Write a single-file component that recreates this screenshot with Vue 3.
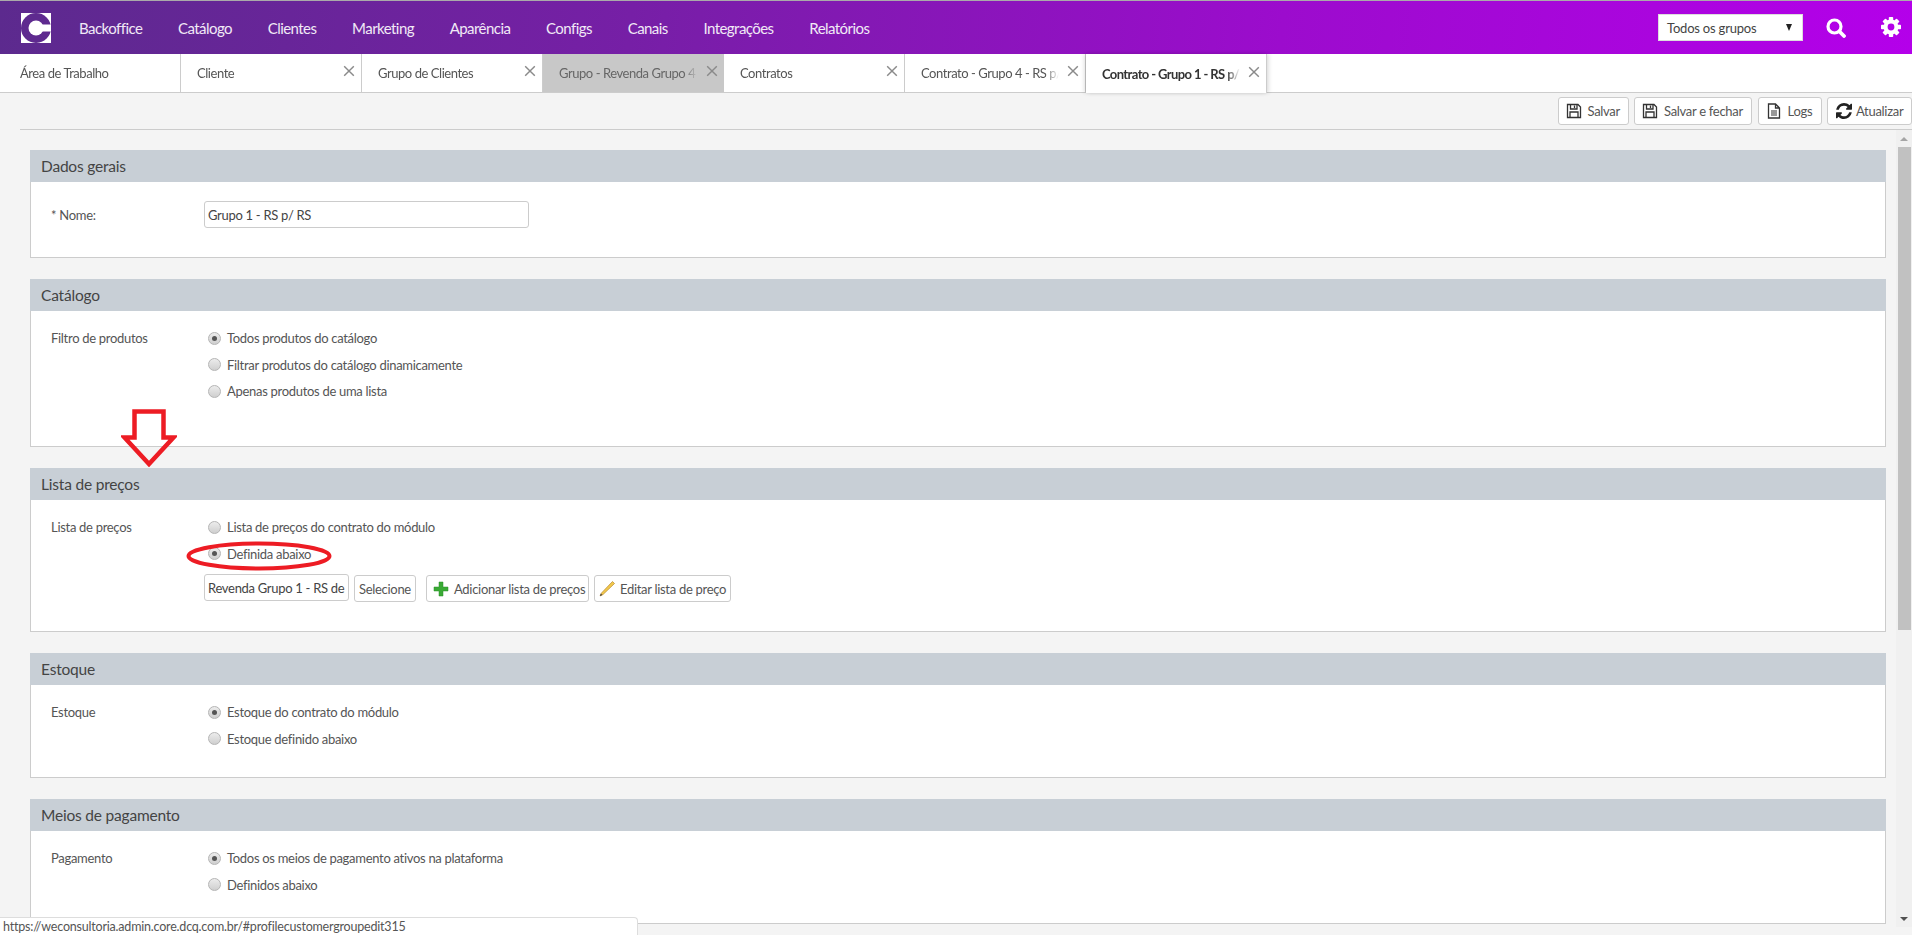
<template>
  <div class="page">
    <header class="topbar">
      <svg class="logo" viewBox="0 0 30 30">
        <rect width="30" height="30" fill="#fff" />
        <circle cx="15" cy="15" r="15" fill="#5e2a8f" />
        <circle cx="15" cy="15" r="7.5" fill="#fff" />
        <rect x="15" y="11.5" width="15" height="7" fill="#fff" />
      </svg>
      <nav class="menu">
        <a v-for="item in menu" :key="item">{{ item }}</a>
      </nav>
      <div class="group-select">
        <span>Todos os grupos</span>
        <i class="caret"></i>
      </div>
      <svg class="search" viewBox="0 0 20 20">
        <circle cx="8.5" cy="8.5" r="6.5" fill="none" stroke="#fff" stroke-width="3.2" />
        <path d="M13.5 13.5L18 18" stroke="#fff" stroke-width="3.8" stroke-linecap="round" />
      </svg>
      <svg class="gear" viewBox="0 0 20 20">
        <rect
          v-for="a in [0, 45, 90, 135, 180, 225, 270, 315]"
          :key="a"
          x="7.8"
          y="0"
          width="4.4"
          height="5"
          rx="0.8"
          fill="#fff"
          :transform="`rotate(${a} 10 10)`"
        />
        <circle cx="10" cy="10" r="5.4" fill="none" stroke="#fff" stroke-width="4" />
      </svg>
    </header>

    <div class="tabs">
      <div
        v-for="tab in tabs"
        :key="tab.title"
        class="tab"
        :class="{ active: tab.active, muted: tab.muted, home: tab.home }"
      >
        <span class="tab-title">{{ tab.title }}</span>
        <svg v-if="!tab.home" class="tab-close" viewBox="0 0 10 10">
          <path d="M1 1l8 8M9 1l-8 8" stroke="#8a8a8a" stroke-width="1.2" fill="none" />
        </svg>
      </div>
    </div>

    <div class="toolbar">
      <button class="btn save">
        <svg class="ico" viewBox="0 0 16 16">
          <path d="M1.5 1.5h10.5l2.5 2.5v10.5h-13z" fill="none" stroke="#333" stroke-width="1.3" />
          <path d="M4.5 1.5v4.5h6.5v-4.5M8.5 2.6v2.4M4 14.5v-5.5h8v5.5" fill="none" stroke="#333" stroke-width="1.3" />
        </svg>
        Salvar
      </button>
      <button class="btn save-close">
        <svg class="ico" viewBox="0 0 16 16">
          <path d="M1.5 1.5h10.5l2.5 2.5v10.5h-13z" fill="none" stroke="#333" stroke-width="1.3" />
          <path d="M4.5 1.5v4.5h6.5v-4.5M8.5 2.6v2.4M4 14.5v-5.5h8v5.5" fill="none" stroke="#333" stroke-width="1.3" />
        </svg>
        Salvar e fechar
      </button>
      <button class="btn logs">
        <svg class="ico" viewBox="0 0 16 16">
          <path d="M2.5 1h7l4 4v10h-11zM9.5 1v4h4" fill="none" stroke="#333" stroke-width="1.3" />
          <path d="M5 8h6M5 10h6M5 12h6" stroke="#333" stroke-width="1.1" />
        </svg>
        Logs
      </button>
      <button class="btn refresh">
        <svg class="ico" viewBox="0 0 1536 1536">
          <path
            fill="#222"
            d="M1511 928q0 5-1 7-64 268-268 434.5t-478 166.5q-146 0-282.5-55t-243.5-157l-129 129q-19 19-45 19t-45-19-19-45v-448q0-26 19-45t45-19h448q26 0 45 19t19 45-19 45l-137 137q71 66 161 102t187 36q134 0 250-65t186-179q11-17 53-117 8-23 30-23h192q13 0 22.5 9.5t9.5 22.5zm25-800v448q0 26-19 45t-45 19h-448q-26 0-45-19t-19-45 19-45l138-138q-148-137-349-137-134 0-250 65t-186 179q-11 17-53 117-8 23-30 23h-199q-13 0-22.5-9.5t-9.5-22.5v-7q65-268 270-434.5t480-166.5q146 0 284 55.5t245 156.5l130-129q19-19 45-19t45 19 19 45z"
          />
        </svg>
        Atualizar
      </button>
    </div>

    <div class="workspace">
      <main class="forms">
        <section class="panel">
          <h2>Dados gerais</h2>
          <div class="panel-body name-body">
            <label class="field-label">* Nome:</label>
            <input class="text-input name-input" value="Grupo 1 - RS p/ RS" />
          </div>
        </section>

        <section v-for="s in sections" :key="s.title" class="panel">
          <h2>{{ s.title }}</h2>
          <div class="panel-body" :class="s.bodyClass">
            <label class="field-label">{{ s.label }}</label>
            <div class="options">
              <div v-for="o in s.options" :key="o.text" class="option">
                <span class="radio" :class="{ on: o.on }"></span>
                {{ o.text }}
              </div>
              <div v-if="s.priceRow" class="price-row">
                <input class="text-input price-input" value="Revenda Grupo 1 - RS de RS" />
                <button class="btn small select-btn">Selecione</button>
                <button class="btn small add-btn">
                  <svg class="ico plus" viewBox="0 0 16 16">
                    <path d="M6 1h4v5h5v4h-5v5h-4v-5h-5v-4h5z" fill="#3aaa35" stroke="#2b8f2b" stroke-width="0.5" />
                  </svg>
                  Adicionar lista de preços
                </button>
                <button class="btn small edit-btn">
                  <svg class="ico pencil" viewBox="0 0 16 16">
                    <path d="M13.5 0.5l2 2-11.5 11-3 1.5 1.5-3z" fill="#f2c94c" stroke="#b8862b" stroke-width="0.7" />
                    <path d="M1 15l0.8-2.4 1.6 1.5z" fill="#444" />
                  </svg>
                  Editar lista de preço
                </button>
              </div>
            </div>
          </div>
        </section>
      </main>

      <div class="scrollbar">
        <i class="arrow-up"></i>
        <div class="thumb"></div>
        <i class="arrow-down"></i>
      </div>
    </div>

    <svg class="mark-arrow" viewBox="0 0 56 58">
      <path d="M13.5 2.5h29v26h10l-24.500 26.500-24.500-26.500h10z" fill="none" stroke="#ed1c24" stroke-width="4.5" />
    </svg>
    <svg class="mark-ellipse" viewBox="0 0 146 30">
      <ellipse cx="73" cy="15" rx="70.5" ry="12.5" fill="none" stroke="#ed1c24" stroke-width="4" />
    </svg>

    <div class="status">https://weconsultoria.admin.core.dcq.com.br/#profilecustomergroupedit315</div>
  </div>
</template>

<script setup>
const menu = [
  "Backoffice",
  "Catálogo",
  "Clientes",
  "Marketing",
  "Aparência",
  "Configs",
  "Canais",
  "Integrações",
  "Relatórios",
];

const tabs = [
  { title: "Área de Trabalho", home: true },
  { title: "Cliente" },
  { title: "Grupo de Clientes" },
  { title: "Grupo - Revenda Grupo 4 - RS", muted: true },
  { title: "Contratos" },
  { title: "Contrato - Grupo 4 - RS p/ RS" },
  { title: "Contrato - Grupo 1 - RS p/ RS", active: true },
];

const sections = [
  {
    title: "Catálogo",
    label: "Filtro de produtos",
    bodyClass: "tall",
    options: [
      { text: "Todos produtos do catálogo", on: true },
      { text: "Filtrar produtos do catálogo dinamicamente" },
      { text: "Apenas produtos de uma lista" },
    ],
  },
  {
    title: "Lista de preços",
    label: "Lista de preços",
    bodyClass: "price",
    priceRow: true,
    options: [
      { text: "Lista de preços do contrato do módulo" },
      { text: "Definida abaixo", on: true },
    ],
  },
  {
    title: "Estoque",
    label: "Estoque",
    options: [
      { text: "Estoque do contrato do módulo", on: true },
      { text: "Estoque definido abaixo" },
    ],
  },
  {
    title: "Meios de pagamento",
    label: "Pagamento",
    options: [
      { text: "Todos os meios de pagamento ativos na plataforma", on: true },
      { text: "Definidos abaixo" },
    ],
  },
];
</script>

<style>
html,
body {
  margin: 0;
  height: 100%;
  overflow: hidden;
  background: #f4f4f4;
}
</style>

<style scoped>
.page {
  position: relative;
  width: 1912px;
  height: 935px;
  overflow: hidden;
  display: flex;
  flex-direction: column;
  font-family: "Lato", "Open Sans", sans-serif;
  font-size: 13px;
  letter-spacing: -0.3px;
  color: #555;
  background: #f4f4f4;
}

.topbar {
  height: 53px;
  flex: none;
  display: flex;
  align-items: center;
  border-top: 1px solid #aaa;
  background: linear-gradient(95deg, #5c2a8e 0%, #761fa6 33%, #9c0ccd 67%, #b400ea 100%);
}

.logo {
  width: 30px;
  height: 30px;
  margin: 0 28px 0 21px;
  flex: none;
}

.menu {
  display: flex;
  gap: 35.7px;
  flex: 1;
  font-size: 15px;
  letter-spacing: -0.55px;
  color: #f1e9f6;
}

.group-select {
  width: 145px;
  height: 27px;
  box-sizing: border-box;
  padding: 0 7px 0 8px;
  display: flex;
  align-items: center;
  justify-content: space-between;
  background: #fff;
  border: 1px solid #ddd;
  color: #444;
  letter-spacing: -0.2px;
}

.caret {
  width: 0;
  height: 0;
  margin-right: 3px;
  border-left: 3.5px solid transparent;
  border-right: 3.5px solid transparent;
  border-top: 7px solid #222;
}

.search {
  width: 20px;
  height: 20px;
  margin-left: 23px;
}

.gear {
  width: 20px;
  height: 20px;
  margin: -2px 11px 0 35px;
}

.tabs {
  height: 38px;
  flex: none;
  display: flex;
  background: #fff;
  border-bottom: 1px solid #ccc;
  letter-spacing: -0.45px;
}

.tab {
  width: 181px;
  box-sizing: border-box;
  display: flex;
  align-items: center;
  padding: 0 6px 0 16px;
  border-right: 1px solid #ccc;
  white-space: nowrap;
}

.tab.home {
  padding-left: 20px;
}

.tab.muted {
  background: #c8c8c8;
  border-right: 0;
  color: #666;
}

.tab.active {
  margin-bottom: -1px;
  background: #fff;
  font-weight: 700;
  letter-spacing: -0.6px;
  color: #333;
  box-shadow: -2px 0 4px rgba(0, 0, 0, 0.12), 2px 0 4px rgba(0, 0, 0, 0.12);
}

.tab-title {
  flex: 1;
  min-width: 0;
  overflow: hidden;
  -webkit-mask-image: linear-gradient(to right, #000 90%, transparent 100%);
  mask-image: linear-gradient(to right, #000 90%, transparent 100%);
}

.tab-close {
  width: 12px;
  height: 12px;
  margin: -4px 0 0 8px;
  flex: none;
}

.toolbar {
  height: 37px;
  flex: none;
  box-sizing: border-box;
  margin-left: 20px;
  padding-top: 4px;
  display: flex;
  justify-content: flex-end;
  align-items: flex-start;
  gap: 5.5px;
  border-bottom: 1px solid #ccc;
}

.btn {
  height: 28px;
  box-sizing: border-box;
  padding: 0 7px;
  display: flex;
  align-items: center;
  gap: 6px;
  background: #fff;
  border: 1px solid #ccc;
  border-radius: 3px;
  font: inherit;
  letter-spacing: inherit;
  color: #555;
  white-space: nowrap;
}

.btn.save {
  width: 71px;
}

.btn.save-close {
  width: 118px;
}

.btn.logs {
  width: 64px;
}

.btn.refresh {
  width: 85px;
  padding: 0 0 0 8px;
  gap: 4px;
}

.ico {
  width: 16px;
  height: 16px;
  flex: none;
}

.workspace {
  flex: none;
  height: 797px;
  display: flex;
}

.forms {
  flex: 1;
  box-sizing: border-box;
  padding: 20px 10px 0 30px;
  display: flex;
  flex-direction: column;
  gap: 21px;
  min-width: 0;
}

.panel {
  background: #fff;
  border: 1px solid #ccc;
  border-top: 0;
}

.panel h2 {
  height: 32px;
  margin: 0 -1px;
  padding-left: 11px;
  font-size: 15.5px;
  font-weight: 400;
  line-height: 32px;
  letter-spacing: -0.2px;
  color: #444;
  background: #c8cfd6;
}

.panel-body {
  display: flex;
  box-sizing: border-box;
  height: 92px;
  padding: 14px 0 0 20px;
}

.panel-body.name-body {
  height: 75px;
  padding-top: 19px;
  align-items: flex-start;
}

.panel-body.tall {
  height: 135px;
}

.panel-body.price {
  height: 131px;
}

.field-label {
  width: 153px;
  flex: none;
  line-height: 27px;
}

.name-body .field-label {
  line-height: 28px;
}

.options {
  display: flex;
  flex-direction: column;
}

.option {
  height: 26.5px;
  display: flex;
  align-items: center;
  gap: 6px;
  white-space: nowrap;
}

.radio {
  width: 13px;
  height: 13px;
  margin-left: 4px;
  box-sizing: border-box;
  border: 1px solid #b5b5b5;
  border-radius: 50%;
  background: linear-gradient(#ececec, #cfcfcf);
  position: relative;
}

.radio.on::after {
  content: "";
  position: absolute;
  left: 3px;
  top: 3px;
  width: 5px;
  height: 5px;
  border-radius: 50%;
  background: #555;
}

.text-input {
  box-sizing: border-box;
  height: 27px;
  padding: 0 3px;
  background: #fff;
  border: 1px solid #ccc;
  border-radius: 3px;
  font: inherit;
  letter-spacing: inherit;
  color: #444;
  outline: none;
}

.name-input {
  width: 325px;
}

.price-row {
  margin-top: 7px;
  display: flex;
  align-items: flex-start;
  gap: 5px;
}

.price-input {
  width: 145px;
}

.btn.small {
  margin-top: 1px;
  height: 27px;
  padding: 0 4px;
  gap: 5px;
}

.select-btn {
  width: 62px;
  margin-right: 5px;
}

.add-btn {
  width: 163px;
}

.edit-btn {
  width: 137px;
}

.plus {
  margin-left: 2px;
}

.scrollbar {
  width: 16px;
  flex: none;
  display: flex;
  flex-direction: column;
  align-items: center;
  background: #f0f0f0;
}

.arrow-up,
.arrow-down {
  width: 0;
  height: 0;
  flex: none;
  border-left: 4px solid transparent;
  border-right: 4px solid transparent;
}

.arrow-up {
  margin: 7px 0 6px;
  border-bottom: 4px solid #a5a5a5;
}

.thumb {
  width: 13px;
  height: 483px;
  background: #c1c1c1;
}

.arrow-down {
  margin-top: auto;
  margin-bottom: 6px;
  border-top: 4px solid #505050;
}

.mark-arrow {
  position: absolute;
  left: 121px;
  top: 409px;
  width: 56px;
  height: 58px;
}

.mark-ellipse {
  position: absolute;
  left: 186px;
  top: 541px;
  width: 146px;
  height: 30px;
}

.status {
  position: absolute;
  left: 0;
  bottom: 0;
  width: 638px;
  height: 18px;
  box-sizing: border-box;
  padding-left: 3px;
  line-height: 17px;
  font-size: 12.5px;
  letter-spacing: -0.2px;
  color: #555;
  background: #fff;
  border: 1px solid #ddd;
  border-left: 0;
  border-bottom: 0;
  border-top-right-radius: 4px;
}
</style>
